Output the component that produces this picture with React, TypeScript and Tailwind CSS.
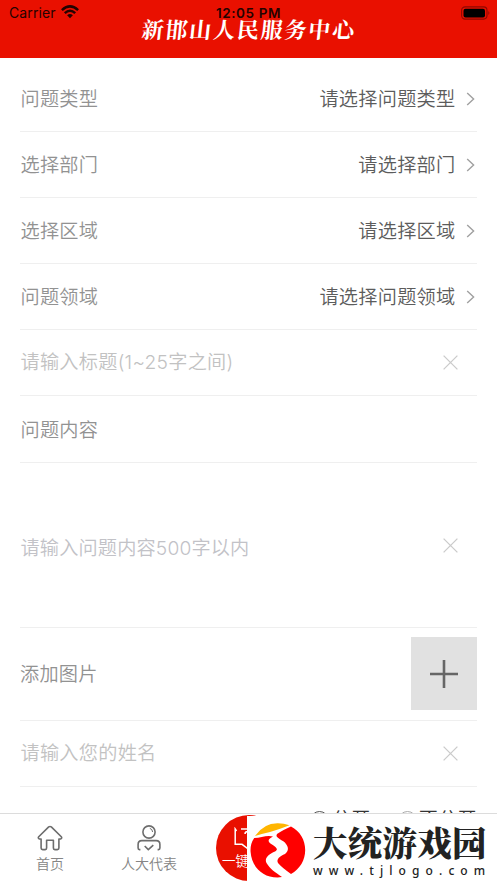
import type { ReactNode } from "react";

function Chevron() {
  return (
    <svg className="ml-[10.5px] mr-[2px] mt-[1px] h-[14px] w-[9px] shrink-0" viewBox="0 0 9 14" fill="none" stroke="#a0a0a0" strokeWidth="1.4">
      <path d="M1.2 1L7.6 7L1.2 13" />
    </svg>
  );
}

function Clear() {
  return (
    <svg className="mr-[19px] h-[15px] w-[15px] shrink-0" viewBox="0 0 15 15" fill="none" stroke="#cbcbcb" strokeWidth="1.3">
      <path d="M.6 .6L14.4 14.4M14.4 .6L.6 14.4" />
    </svg>
  );
}

function Row({ className, children }: { className: string; children: ReactNode }) {
  return (
    <div className={`flex shrink-0 items-center justify-between border-b border-[#efefef] ${className}`}>
      {children}
    </div>
  );
}

function SelectRow({ label, value, className }: { label: string; value: string; className: string }) {
  return (
    <Row className={className}>
      <span className="pl-[0.5px] pt-[2px] text-[#929292]">{label}</span>
      <span className="flex items-center text-[#5c5c5c]">
        <span className="pt-[2px]">{value}</span>
        <Chevron />
      </span>
    </Row>
  );
}

function StatusBar() {
  return (
    <div className="grid h-[26px] grid-cols-3 items-center pl-[9px] pr-[7px] font-['Inter','Liberation_Sans',sans-serif] text-[14px] leading-none text-[#240300]">
      <div className="flex items-center gap-[5px] font-normal tracking-[0.1px]">
        Carrier
        <svg className="-mt-[2px] h-[14px] w-[18px]" viewBox="0 0 18 14" fill="none" stroke="#240300" strokeWidth="2.5">
          <path d="M.9 5.1Q9-2.3 17.1 5.1M3.8 8.1Q9 3.3 14.2 8.1" />
          <path d="M9 13.2L6.1 10.3Q9 7.9 11.9 10.3Z" fill="#240300" stroke="none" />
        </svg>
      </div>
      <div className="whitespace-nowrap pr-[2px] pt-[1px] text-center text-[13.5px] font-semibold tracking-[0.6px]">12:05 PM</div>
      <svg className="h-[14px] w-[29px] justify-self-end" viewBox="0 0 29 14">
        <rect x=".6" y=".9" width="25.4" height="12.2" rx="3.5" fill="none" stroke="#8e0800" strokeWidth="1.1" />
        <rect x="2.5" y="2.8" width="21.5" height="8.6" rx="2" fill="#000" />
        <path d="M27.4 5Q29.4 7 27.4 9Z" fill="#8e0800" />
      </svg>
    </div>
  );
}

function HomeIcon() {
  return (
    <svg className="h-[26px] w-[26px]" viewBox="0 0 26 26" fill="none" stroke="#6d6d6d" strokeWidth="1.6" strokeLinejoin="round" strokeLinecap="round">
      <path d="M4.1 14H2.4Q.6 13.2 1.7 11.7L11.7 1.9Q13 1 14.3 1.9L24.3 11.7Q25.4 13.2 23.6 14H21.9V23Q21.9 24.6 20.3 24.6H17.8Q16.4 24.6 16.4 23V15.3H9.6V23Q9.6 24.6 8.2 24.6H5.7Q4.1 24.6 4.1 23Z" />
    </svg>
  );
}

function PersonIcon() {
  return (
    <svg className="h-[26px] w-[26px]" viewBox="0 0 26 26" fill="none" stroke="#6d6d6d" strokeWidth="1.6">
      <circle cx="13" cy="7" r="6.1" />
      <path d="M13.8 3.3Q16.5 4.2 16.6 7" strokeWidth="1" />
      <path d="M4.4 24.6H3.4Q2.1 24.6 2.1 23V19.4Q2.1 15.6 5.8 15.6H20.2Q23.9 15.6 23.9 19.4V23Q23.9 24.6 22.5 24.6H21.6M8.7 21L12.3 24.6L17.3 20.2" />
    </svg>
  );
}

function Tab({ icon, label, className }: { icon: ReactNode; label: string; className: string }) {
  return (
    <div className={`flex flex-col items-center pt-[11px] text-[14px] leading-[23px] text-[#858585] ${className}`}>
      {icon}
      <span className="mt-[1px] whitespace-nowrap">{label}</span>
    </div>
  );
}

function Watermark() {
  return (
    <div className="absolute bottom-0 left-[247px] right-0 flex h-[67px] bg-white">
      <svg className="ml-[3px] mt-[7px] h-[55px] w-[56px] shrink-0" viewBox="0 0 56 55">
        <path d="M5 13Q14 0 28 .3Q34 .3 39.5 2.2Q30 6 20 9Q11 11 5 13Z" fill="#ffb500" />
        <path
          d="M4.2 15Q0 21 .6 29C1.5 43 12 54.5 27.5 54.5L32 54C25 49 20 46 16.5 40C14 35 19 31 25 28.5C29 26.5 26 24 22 21.5C16 18 19 15.5 23 13.5C17 11.5 11 15 4.2 15Z"
          fill="#f00"
        />
        <path
          d="M41 3.5C50 8 55.2 17 55.2 27C55.2 37 50 46 41 51C36 47 31 44 28 40C26 36 30 33 35 31C39 28 38.5 24 36 21C34 17 24 15 27 11C31 8 36 6 41 3.5Z"
          fill="#f00"
        />
      </svg>
      <div className="ml-[7px] pt-[4px] text-[#222]">
        <div className="h-[42px] whitespace-nowrap font-['Noto_Serif_CJK_SC','Noto_Sans_CJK_SC',serif] text-[34.5px] font-black leading-[42px]">大统游戏园</div>
        <div className="h-[18px] whitespace-nowrap font-['Noto_Sans',sans-serif] text-[12px] font-medium leading-[18px] tracking-[6.1px]">www.tjlogo.com</div>
      </div>
    </div>
  );
}

export default function App() {
  return (
    <div className="relative flex h-[883px] w-full flex-col overflow-hidden bg-white font-['Inter','Noto_Sans_CJK_SC',sans-serif] text-[19.2px] font-[350] leading-none tracking-[0.25px]">
      <header className="relative h-[58px] shrink-0 bg-[#e91000]">
        <StatusBar />
        <h1 className="absolute left-[142px] top-[15px] -skew-x-6 whitespace-nowrap font-['Noto_Serif_CJK_SC','Noto_Sans_CJK_SC',serif] text-[22px] font-bold leading-[27px] tracking-[1.8px] text-white">
          新邯山人民服务中心
        </h1>
      </header>

      <main className="flex min-h-0 flex-1 flex-col overflow-hidden pl-5 pr-5 pt-[7px]">
        <SelectRow label="问题类型" value="请选择问题类型" className="h-[67px] pt-[1px]" />
        <SelectRow label="选择部门" value="请选择部门" className="h-[66px]" />
        <SelectRow label="选择区域" value="请选择区域" className="h-[66px]" />
        <SelectRow label="问题领域" value="请选择问题领域" className="h-[66px]" />
        <Row className="h-[66px] text-[#c2c2c2]">
          <span className="pl-[0.5px]">请输入标题(1~25字之间)</span>
          <Clear />
        </Row>
        <Row className="h-[67px] pl-[0.5px] pt-[3px] text-[#929292]">问题内容</Row>
        <Row className="h-[165px] text-[#c2c2c7]">
          <span className="pl-[0.5px] pt-[7px] tracking-[0.15px]">请输入问题内容500字以内</span>
          <Clear />
        </Row>
        <Row className="h-[93px] text-[#929292]">
          <span className="pt-[2px]">添加图片</span>
          <div className="mb-px flex h-[73px] w-[66px] items-center justify-center bg-[#e1e1e1]">
            <svg className="h-[28px] w-[28px]" viewBox="0 0 28 28" stroke="#666" strokeWidth="2.6">
              <path d="M14 0V28M0 14H28" />
            </svg>
          </div>
        </Row>
        <Row className="h-[66px] text-[#c2c2c2]">
          <span className="pl-[0.5px]">请输入您的姓名</span>
          <Clear />
        </Row>
        <div className="flex h-[66px] shrink-0 items-center justify-end text-[#333]">
          <i className="mr-[3px] h-[19px] w-[19px] rounded-full border border-[#555]" />
          公开
          <i className="ml-[27px] mr-[2px] h-[19px] w-[19px] rounded-full border border-[#aaa]" />
          不公开
        </div>
      </main>

      <footer className="relative flex h-[70px] shrink-0 border-t border-[#dcdcdc] bg-white tracking-normal">
        <Tab className="w-[100px]" icon={<HomeIcon />} label="首页" />
        <Tab className="w-[98px]" icon={<PersonIcon />} label="人大代表" />
        <div className="absolute left-[216px] top-[1px] h-[66px] w-[66px] overflow-hidden rounded-full bg-[#e91000] text-white">
          <svg className="ml-[18px] mt-[12px] h-[22px] w-[30px]" viewBox="0 0 30 22" fill="none" stroke="#fff" strokeWidth="1.5">
            <path d="M2.5 4L1.2 2V17.3H8L13 21L18 17.3H27V2H7M11 7Q11 4.5 14 4.5Q17 5 15 8L13.5 10" />
          </svg>
          <span className="ml-[6px] mt-[5px] block whitespace-nowrap text-[13.5px] leading-[14px]">一键反映</span>
        </div>
      </footer>
      <Watermark />
    </div>
  );
}
